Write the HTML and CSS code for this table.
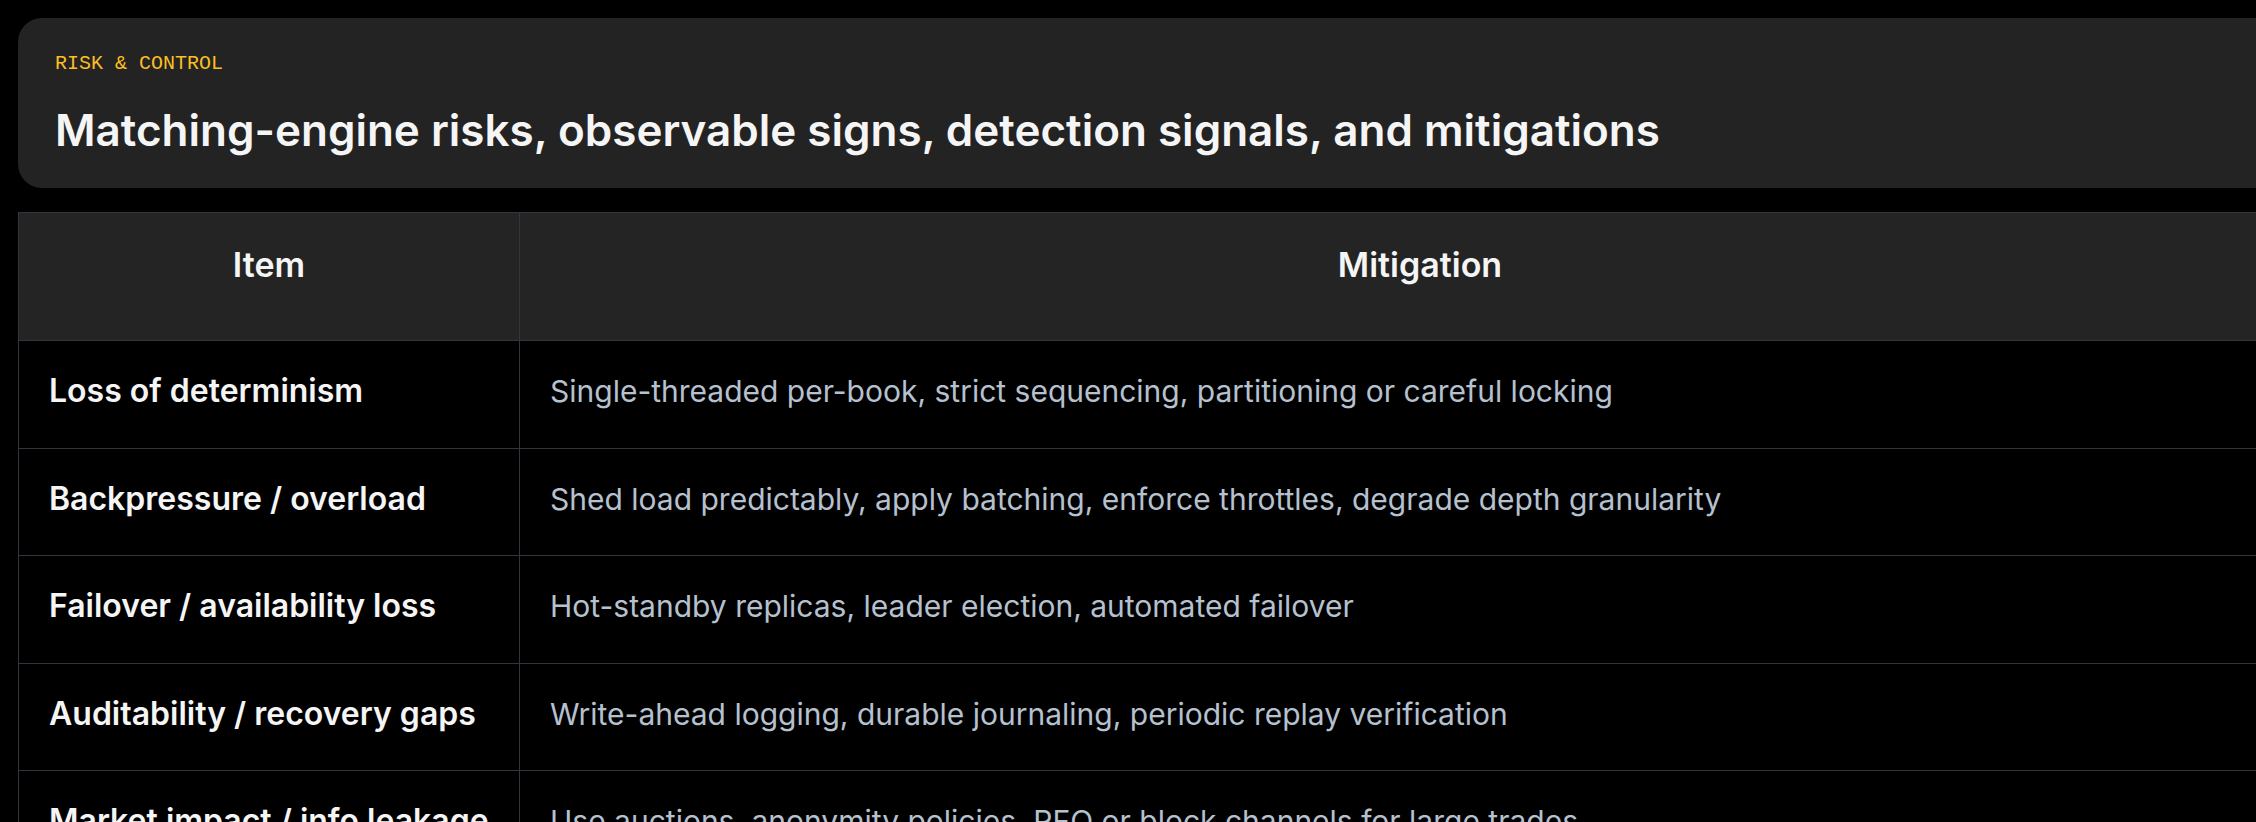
FILE: index.html
```html
<!DOCTYPE html>
<html lang="en">
<head>
<meta charset="utf-8">
<title>Risk &amp; Control</title>
<link rel="stylesheet" href="styles.css">
</head>
<body>
<div class="frame">
  <main class="page">
    <header class="card">
      <div class="eyebrow">RISK &amp; CONTROL</div>
      <h1 class="title">Matching-engine risks, observable signs, detection signals, and mitigations</h1>
    </header>
    <table class="grid">
      <colgroup>
        <col class="col-item">
        <col class="col-mit">
      </colgroup>
      <thead>
        <tr>
          <th>Item</th>
          <th>Mitigation</th>
        </tr>
      </thead>
      <tbody>
        <tr>
          <td class="item">Loss of determinism</td>
          <td class="mit">Single-threaded per-book, strict sequencing, partitioning or careful locking</td>
        </tr>
        <tr>
          <td class="item">Backpressure / overload</td>
          <td class="mit">Shed load predictably, apply batching, enforce throttles, degrade depth granularity</td>
        </tr>
        <tr>
          <td class="item">Failover / availability loss</td>
          <td class="mit">Hot-standby replicas, leader election, automated failover</td>
        </tr>
        <tr>
          <td class="item">Auditability / recovery gaps</td>
          <td class="mit">Write-ahead logging, durable journaling, periodic replay verification</td>
        </tr>
        <tr>
          <td class="item">Market impact / info leakage</td>
          <td class="mit">Use auctions, anonymity policies, RFQ or block channels for large trades</td>
        </tr>
      </tbody>
    </table>
  </main>
</div>
</body>
</html>
```

FILE: styles.css
```css
* { box-sizing: border-box; }

html, body {
  margin: 0;
  padding: 0;
  background: #000;
}

body {
  font-family: Inter, "Noto Sans", sans-serif;
  color: #f5f5f5;
}

.frame {
  width: 100vw;
  height: 100vh;
  overflow: hidden;
}

.page {
  width: 2339px;
  padding: 18px;
  display: flex;
  flex-direction: column;
  gap: 24px;
}

.card {
  background: #232323;
  border-radius: 24px;
  padding: 32px 37px 31px;
  display: flex;
  flex-direction: column;
  gap: 26px;
}

.eyebrow {
  font-family: "Liberation Mono", "DejaVu Sans Mono", monospace;
  font-size: 20px;
  line-height: 28px;
  color: #fbbf24;
}

.title {
  margin: 0;
  font-size: 44px;
  line-height: 53px;
  font-weight: 600;
  color: #f5f5f5;
}

.grid {
  width: 100%;
  border-collapse: collapse;
  table-layout: fixed;
}

.col-item { width: 501px; }

.grid th,
.grid td {
  border: 1px solid #30363d;
  padding: 0 30px;
}

.grid th {
  background: #242424;
  font-size: 34px;
  line-height: 48px;
  font-weight: 600;
  text-align: center;
  padding-top: 28px;
  padding-bottom: 51px;
  color: #f5f5f5;
}

.grid td {
  line-height: 42px;
  padding-top: 29px;
  padding-bottom: 35.5px;
  vertical-align: middle;
}

.item {
  font-size: 32px;
  font-weight: 600;
  color: #f5f5f5;
}

.mit {
  font-size: 30px;
  font-weight: 400;
  color: #b6c1cf;
}
```
